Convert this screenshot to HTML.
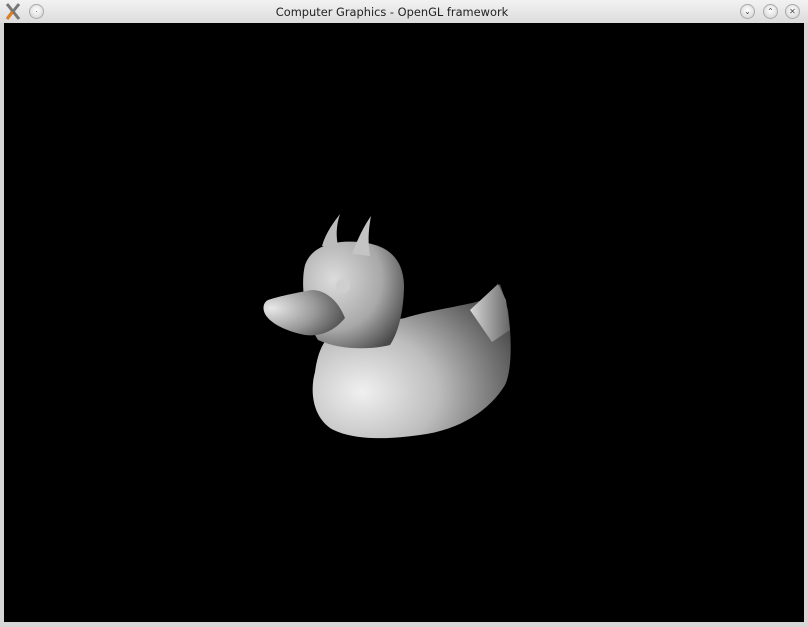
<!DOCTYPE html>
<html><head><style>
html,body{margin:0;padding:0;width:808px;height:627px;overflow:hidden;background:#d6d6d6;font-family:"Liberation Sans","DejaVu Sans",sans-serif}
.tb{position:absolute;left:0;top:0;width:808px;height:23px;background:linear-gradient(#f2f2f2,#dcdcdc);}
.title{position:absolute;left:-12px;width:808px;top:5px;text-align:center;font-size:11.4px;color:#222;font-family:"DejaVu Sans",sans-serif}
.btn{position:absolute;top:4px;width:13px;height:13px;border-radius:50%;background:radial-gradient(circle at 50% 40%,#fff,#cfcfcf);border:1px solid #aaa;font-size:8px;line-height:13px;text-align:center;color:#444}
.gl{position:absolute;left:4px;top:23px;width:800px;height:599px;background:#000}
</style></head><body>
<div class="tb">
<svg style="position:absolute;left:5px;top:3px" width="16" height="17" viewBox="0 0 16 17"><path d="M2 1 L14 16 M14 1 L2 16" stroke="#777" stroke-width="3"/><path d="M2 16 L7 9" stroke="#e08020" stroke-width="3"/></svg>
<div class="btn" style="left:29px">·</div>
<div class="title">Computer Graphics - OpenGL framework</div>
<div class="btn" style="left:740px">⌄</div>
<div class="btn" style="left:763px">⌃</div>
<div class="btn" style="left:785px">✕</div>
</div>
<div class="gl"></div>
<svg style="position:absolute;left:0;top:0" width="808" height="627">
<defs>
<radialGradient id="b" cx="0.25" cy="0.7" r="0.85"><stop offset="0" stop-color="#f0f0f0"/><stop offset="0.45" stop-color="#bdbdbd"/><stop offset="1" stop-color="#4a4a4a"/></radialGradient>
<radialGradient id="h" cx="0.3" cy="0.35" r="0.8"><stop offset="0" stop-color="#dcdcdc"/><stop offset="0.6" stop-color="#a8a8a8"/><stop offset="1" stop-color="#4a4a4a"/></radialGradient>
<radialGradient id="bk" cx="0.1" cy="0.4" r="0.9"><stop offset="0" stop-color="#e8e8e8"/><stop offset="0.6" stop-color="#999"/><stop offset="1" stop-color="#555"/></radialGradient>
<linearGradient id="k" x1="0" y1="0" x2="1" y2="0"><stop offset="0" stop-color="#d8d8d8"/><stop offset="1" stop-color="#666"/></linearGradient>
</defs>
<path d="M405 318 C430 310 470 305 482 300 L500 284 L504 296 L508 310 C512 340 512 370 505 385 C490 410 460 430 420 435 C385 440 350 440 330 428 C312 415 310 390 315 372 C318 350 325 335 340 330 Z" fill="url(#b)"/>
<path d="M470 310 L498 284 L506 300 L510 330 L492 342 Z" fill="url(#k)"/>
<path d="M318 340 C305 320 300 285 305 265 C312 245 335 240 360 242 C390 245 403 260 404 285 C404 305 400 330 390 345 C370 350 340 350 318 340 Z" fill="url(#h)"/>
<path d="M268 300 C280 296 300 292 312 290 C325 290 338 300 345 318 C335 330 322 337 305 335 C290 332 275 326 268 318 C262 312 262 303 268 300 Z" fill="url(#bk)"/>
<path d="M322 246 C326 232 334 222 340 214 C336 226 336 236 338 246 Z" fill="#bcbcbc"/>
<path d="M352 254 C358 238 364 226 371 216 C368 232 368 244 370 256 Z" fill="#c4c4c4"/>
<circle cx="343" cy="286" r="7" fill="#cfcfcf"/>
</svg>
</body></html>
